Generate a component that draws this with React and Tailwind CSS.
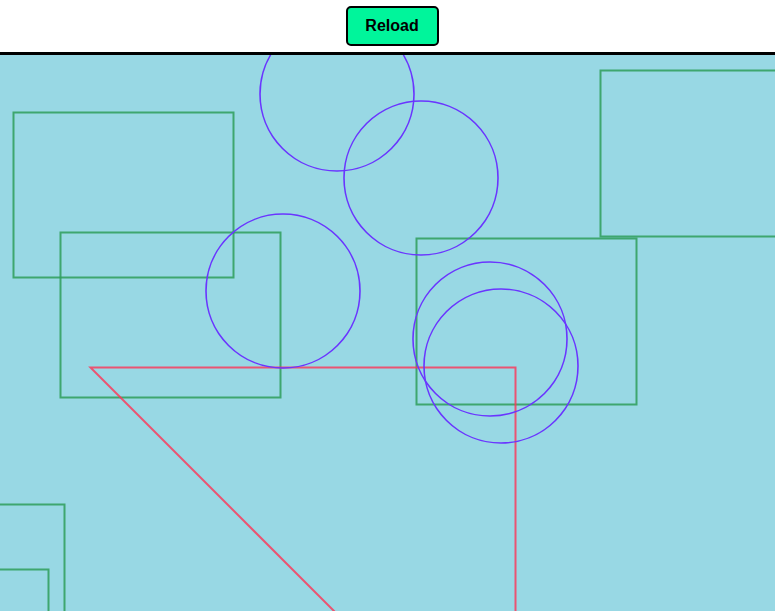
export default function App() {
  const circles = [
    [337, 39],
    [421, 123],
    [283, 236],
    [490, 284],
    [501, 311],
  ];
  const rects = [
    [13, 57, 220, 165],
    [60, 177, 220, 165],
    [416, 183, 220, 166],
    [600, 15, 220, 166],
    [-156, 449, 220, 165],
    [-172, 514, 220, 165],
  ];
  return (
    <div className="w-[775px] h-[611px] overflow-hidden bg-white flex flex-col" style={{ fontFamily: "'Liberation Sans', Arial, sans-serif" }}>
      <div className="h-[52px] flex items-start justify-center pt-[6px] shrink-0">
        <button className="w-[93px] h-[40px] ml-[9px] bg-[#00f59b] border-2 border-black rounded-[5px] text-[16px] font-bold text-black">
          Reload
        </button>
      </div>
      <div className="flex-1 border-t-[3px] border-black bg-[#98d8e4] relative overflow-hidden">
        <svg width="775" height="556" viewBox="0 0 775 556" className="block">
          {rects.map(([x, y, w, h], i) => (
            <rect key={"r" + i} x={x + 0.5} y={y + 0.5} width={w} height={h} fill="none" stroke="#2e9e5a" strokeOpacity="0.85" strokeWidth="2" />
          ))}
          <polygon points="90.5,312.5 515.5,312.5 515.5,737.5" fill="none" stroke="#ff3355" strokeOpacity="0.8" strokeWidth="2" />
          {circles.map(([cx, cy], i) => (
            <circle key={"c" + i} cx={cx} cy={cy} r="77" fill="none" stroke="#6a35ff" strokeWidth="1.6" />
          ))}
        </svg>
      </div>
    </div>
  );
}
